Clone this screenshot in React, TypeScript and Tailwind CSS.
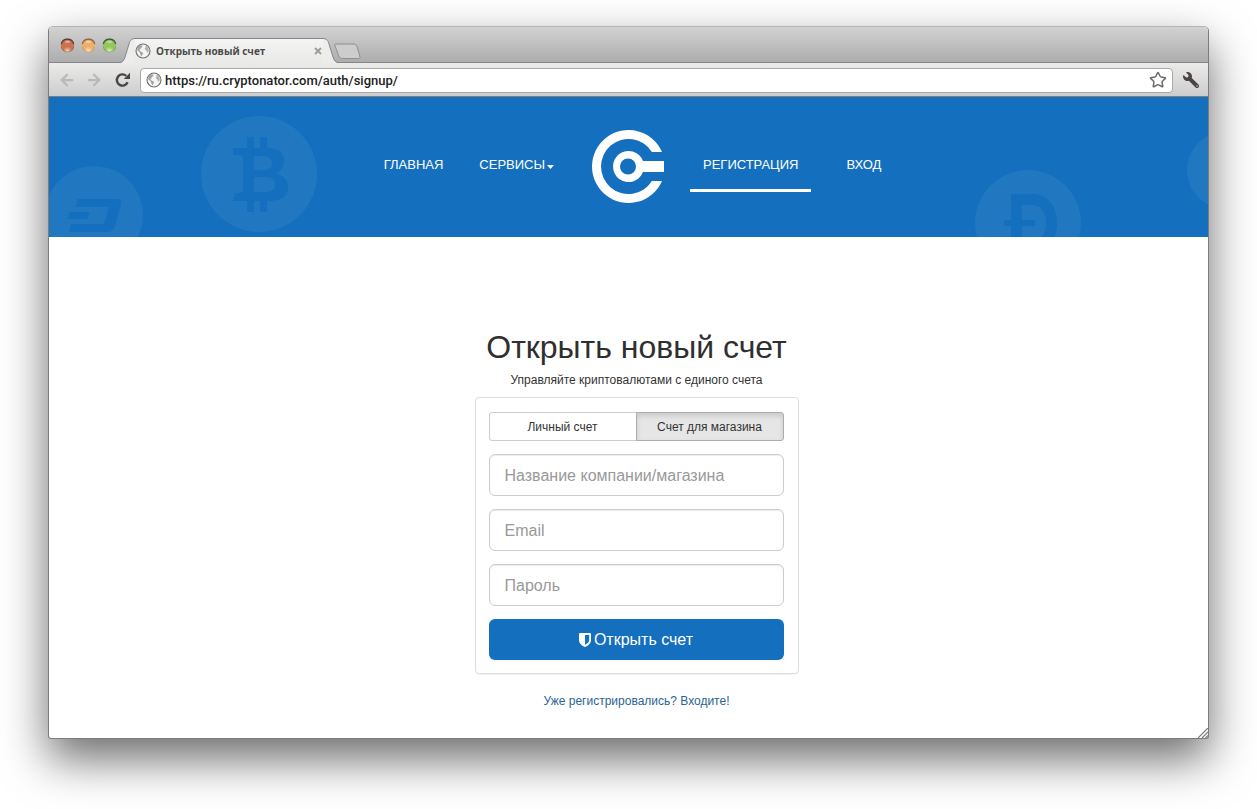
import { useState } from 'react';
import type { ReactNode } from 'react';
import { FaWrench } from 'react-icons/fa';
import { ArrowLeft, ArrowRight, Star } from 'lucide-react';

function GlobeIcon() {
  return (
    <svg viewBox="0 0 16 16" className="size-4 shrink-0" aria-hidden="true">
      <circle cx="8" cy="8" r="7" fill="#f4f4f4" stroke="#6f6f6f" strokeWidth="1.1" />
      <path d="M3 3.8 5.2 2.2 7.4 2.5 7.2 4.2 5.6 5 5.8 6.2 4.2 6.8 5.4 8.4 7.2 9.2 8.2 10.4 7.200 12 6.4 13.8 5.4 11.6 4.8 9.6 2 7Z" fill="#a3a3a3" />
      <path d="M9.8 2.6 12 3.6 13.4 5.6 13.8 8 12.6 9.8 11.8 8.8 11.2 7.2 10 6.400 9.8 5.2 10.8 4.200Z" fill="#b0b0b0" />
    </svg>
  );
}

function TrafficLight({ id, label, rim, body, glow }: { id: string; label: string; rim: string; body: string; glow: string }) {
  return (
    <button type="button" aria-label={label} className="block size-[15px]">
      <svg viewBox="0 0 15 15" className="size-[15px]">
        <defs>
          <radialGradient id={id} cx="0.5" cy="0.9" r="0.9">
            <stop offset="0" stopColor={glow} />
            <stop offset="0.35" stopColor={body} />
            <stop offset="0.82" stopColor={body} />
            <stop offset="1" stopColor={rim} />
          </radialGradient>
        </defs>
        <circle cx="7.5" cy="7.5" r="6.8" fill={`url(#${id})`} />
        <path d="M1.300 6A6.400 6.400 0 0 1 13.700 6" fill="none" stroke={rim} strokeWidth="1.3" />
        <path d="M1.300 9A6.400 6.400 0 0 0 13.700 9" fill="none" stroke={rim} strokeOpacity="0.3" />
        <ellipse cx="7.5" cy="3.8" rx="2.6" ry="1.2" fill="#fff" fillOpacity="0.4" />
      </svg>
    </button>
  );
}

function TabEdge({ className }: { className: string }) {
  return (
    <svg viewBox="0 0 15 25" className={className} aria-hidden="true">
      <path d="M0 25C3 24.500 4 22 5 19L9 6C10 2 12 .5 15 .5V25Z" fill="#ededec" />
      <path d="M0 24.500C3 24 4 22 5 19L9 6C10 2 12 .5 15 .5" fill="none" stroke="#85858f" />
    </svg>
  );
}

function TabStrip() {
  return (
    <div className="flex h-9 items-end border-b border-[#85858f] bg-linear-to-b from-[#d2d2d2] to-[#adadad]">
      <div className="flex gap-[6px] self-start pt-[11px] pl-[11px]">
        <TrafficLight id="light-close" label="Закрыть" rim="#5c3d38" body="#cb7350" glow="#ffd2b0" />
        <TrafficLight id="light-min" label="Свернуть" rim="#94633c" body="#eab06c" glow="#ffe6b4" />
        <TrafficLight id="light-max" label="Развернуть" rim="#3e5a34" body="#93c560" glow="#dcf8b4" />
      </div>
      <div className="-mb-px ml-[3px] flex h-[25px]">
        <TabEdge className="h-[25px] w-[15px]" />
        <div className="flex w-[188px] items-center border-t border-[#85858f] bg-linear-to-b from-[#f4f4f2] to-[#e9e9e8] pr-px">
          <span className="flex flex-1 items-center gap-[5px]">
            <GlobeIcon />
            <span className="font-['Open_Sans',sans-serif] text-[10px] leading-4 font-bold text-[#4a4a4a]">Открыть новый счет</span>
          </span>
          <button type="button" aria-label="Закрыть вкладку" className="block">
            <svg viewBox="0 0 8 8" className="size-2">
              <path d="M1 1 7 7M7 1 1 7" stroke="#9c9c9c" strokeWidth="1.800" />
            </svg>
          </button>
        </div>
        <TabEdge className="h-[25px] w-[15px] -scale-x-100" />
      </div>
      <button type="button" aria-label="Новая вкладка" className="-ml-[5px] block pb-[2px]">
        <svg viewBox="0 0 28 17" className="block h-[17px] w-7">
          <path d="M3 1H20C22.500 1 23.500 2 24.200 4L26.800 13C27.300 15 26.800 15.500 25.500 15.500H9.500C7.500 15.500 6.500 15 5.800 13L2 3C1.500 1.700 1.700 1 3 1Z" fill="#cdcdcd" stroke="#8e8e92" />
        </svg>
      </button>
    </div>
  );
}

function Toolbar() {
  return (
    <div className="flex h-[34px] items-center border-b border-[#7d7d7d] bg-linear-to-b from-[#ebebea] to-[#cdcdcd] px-[9px] pt-px text-[#4a4444]">
      <button type="button" aria-label="Назад" className="text-[#b9b9b9]">
        <ArrowLeft className="size-[18px]" strokeWidth={3} />
      </button>
      <button type="button" aria-label="Вперёд" className="ml-[9px] text-[#b9b9b9]">
        <ArrowRight className="size-[18px]" strokeWidth={3} />
      </button>
      <button type="button" aria-label="Обновить" className="ml-3">
        <svg viewBox="0 0 16 16" className="size-4">
          <path d="M12.600 10.200A5.600 5.600 0 1 1 11.200 3.800" fill="none" stroke="currentColor" strokeWidth="2.400" />
          <path d="M15 .8V7H8.800Z" fill="currentColor" />
        </svg>
      </button>
      <label className="ml-[9px] flex h-[25px] flex-1 items-center gap-[3px] rounded-[4px] border border-[#a9a9a9] bg-white px-[5px]">
        <GlobeIcon />
        <input
          type="text"
          aria-label="Адрес"
          defaultValue="https://ru.cryptonator.com/auth/signup/"
          className="min-w-0 flex-1 bg-transparent pt-px font-['Roboto',sans-serif] text-[13px] leading-4 font-medium text-[#222] outline-none"
        />
        <Star className="size-[18px] shrink-0 text-[#6b6b6b]" strokeWidth={2} />
      </label>
      <button type="button" aria-label="Настройки" className="ml-[10px]">
        <FaWrench className="size-4 -scale-x-100" />
      </button>
    </div>
  );
}

function BackgroundCoins() {
  return (
    <div className="pointer-events-none absolute inset-0" aria-hidden="true">
      <svg viewBox="0 0 98 98" className="absolute top-[69px] -left-[4px] size-[98px]">
        <circle cx="49" cy="49" r="49" fill="#2277c1" />
        <path d="M33 33H72Q77 33 76 38L70 60Q68 66 62 66H24L26 58H59L64 41H30ZM25 46H45L42 53H22Z" fill="#146fbe" />
      </svg>
      <svg viewBox="0 0 116 116" className="absolute top-[19px] left-[152px] size-[116px]">
        <circle cx="58" cy="58" r="58" fill="#2277c1" />
        <path
          fillRule="evenodd"
          d="M32 32H46V21H53V32H59V21H66V32C78 32 83 37 83 45C83 52 79 56 74 57C82 59 87 64 87 72C87 81 80 85 66 85V96H59V85H53V96H46V85H32L34 77H38C41 77 42 76 42 74V43C42 41 41 39 38 39H32ZM53 40V54H62C68 54 71 52 71 47C71 43 68 40 62 40ZM53 61V76H64C71 76 74 74 74 69C74 64 71 61 64 61Z"
          fill="#146fbe"
        />
      </svg>
      <svg viewBox="0 0 106 106" className="absolute top-[73px] right-[127px] size-[106px]">
        <circle cx="53" cy="53" r="53" fill="#2277c1" />
        <path fillRule="evenodd" d="M36 24H57C73 24 82 36 82 53S73 82 57 82H36V56H29V50H36ZM47 35V50H60V56H47V71H57C66 71 71 64 71 53S66 35 57 35Z" fill="#146fbe" />
      </svg>
      <svg viewBox="0 0 78 78" className="absolute top-[34px] -right-[57px] size-[78px]">
        <circle cx="39" cy="39" r="39" fill="#2277c1" />
      </svg>
    </div>
  );
}

function NavLink({ active = false, children }: { active?: boolean; children: ReactNode }) {
  return (
    <a
      href="#"
      className={`flex h-[52px] items-center border-b-[3px] px-[13px] text-[13px] leading-5 whitespace-nowrap text-white ${active ? 'border-white' : 'border-transparent'}`}
    >
      {children}
    </a>
  );
}

function SiteHeader() {
  return (
    <header className="relative h-[140px] overflow-hidden bg-[#146fbe] pb-[2px]">
      <BackgroundCoins />
      <nav className="relative grid h-full grid-cols-[1fr_auto_1fr] items-center gap-[25px]">
        <div className="flex justify-end gap-[10px]">
          <NavLink>ГЛАВНАЯ</NavLink>
          <NavLink>
            СЕРВИСЫ
            <svg viewBox="0 0 7 4" className="mt-1 ml-[2px] h-1 w-[7px]" aria-hidden="true">
              <path d="M0 0H7L3.500 4Z" fill="currentColor" />
            </svg>
          </NavLink>
        </div>
        <a href="#" aria-label="Cryptonator">
          <svg viewBox="0 0 73 73" className="size-[73px]">
            <path d="M70 22A36.500 36.500 0 1 0 70 51H59.900A27.500 27.500 0 1 1 59.900 22Z" fill="#fff" />
            <path fillRule="evenodd" d="M51 31H72V42H51A15.500 15.500 0 1 1 51 31ZM36 28.500A8 8 0 1 0 36 44.500A8 8 0 1 0 36 28.500Z" fill="#fff" />
          </svg>
        </a>
        <div className="flex gap-[22px]">
          <NavLink active>РЕГИСТРАЦИЯ</NavLink>
          <NavLink>ВХОД</NavLink>
        </div>
      </nav>
    </header>
  );
}

function Field({ type, label }: { type: string; label: string }) {
  return (
    <input
      type={type}
      aria-label={label}
      placeholder={label}
      className="h-[42px] w-full rounded-[6px] border border-[#cccccc] bg-white px-[15px] pt-[2px] text-[16px] leading-5 text-[#333] shadow-[inset_0_1px_1px_rgba(0,0,0,0.075)] outline-none placeholder:text-[#999]"
    />
  );
}

const accountTypes = ['Личный счет', 'Счет для магазина'];

function SignupForm() {
  const [selected, setSelected] = useState(1);
  return (
    <form
      onSubmit={(event) => event.preventDefault()}
      className="flex w-full max-w-[324px] flex-col gap-[13px] rounded-[4px] border border-[#dddddd] pt-[14px] pr-[14px] pb-[13px] pl-[13px] shadow-[0_1px_1px_rgba(0,0,0,0.05)]"
    >
      <div className="flex h-[29px]">
        {accountTypes.map((name, index) => (
          <button
            key={name}
            type="button"
            aria-pressed={selected === index}
            onClick={() => setSelected(index)}
            className={`flex-1 border text-[12px] leading-4 text-[#333] first:rounded-l-[3px] last:-ml-px last:rounded-r-[3px] ${
              selected === index ? 'border-[#adadad] bg-[#e6e6e6] shadow-[inset_0_3px_5px_rgba(0,0,0,0.125)]' : 'border-[#cccccc] bg-white'
            }`}
          >
            {name}
          </button>
        ))}
      </div>
      <Field type="text" label="Название компании/магазина" />
      <Field type="email" label="Email" />
      <Field type="password" label="Пароль" />
      <button type="submit" className="flex h-[41px] items-center justify-center gap-[3px] rounded-[6px] bg-[#146fbe] pt-px text-[16px] leading-5 text-white">
        <svg viewBox="0 0 12 14" className="h-[14px] w-3" aria-hidden="true">
          <path fillRule="evenodd" d="M1 0H11Q12 0 12 1V7C12 10.500 9 12.800 6 14C3 12.800 0 10.500 0 7V1Q0 0 1 0ZM6 2V11.800C8.300 10.600 10.200 9 10.200 7V2Z" fill="currentColor" />
        </svg>
        Открыть счет
      </button>
    </form>
  );
}

export default function App() {
  return (
    <div className="min-h-screen bg-white px-12 pt-[26px] pb-[70px] font-['Liberation_Sans',Arial,sans-serif]">
      <div className="relative overflow-hidden rounded-t-[5px] rounded-b-[3px] border border-[#7c7c7c] border-t-[#b4b4b4] bg-white shadow-[0_20px_46px_rgba(0,0,0,0.58)]">
        <TabStrip />
        <Toolbar />
        <SiteHeader />
        <main className="flex flex-col items-center pt-[89px] pb-[28px] pl-4 text-[#333]">
          <h1 className="text-[32px] leading-[42px] text-[#2f2f2f]">Открыть новый счет</h1>
          <p className="mt-1 mb-2 text-[12px] leading-[17px]">Управляйте криптовалютами с единого счета</p>
          <SignupForm />
          <a href="#" className="mt-[19px] text-[12px] leading-[17px] text-[#2a6496]">Уже регистрировались? Входите!</a>
        </main>
        <svg viewBox="0 0 10 10" className="absolute right-0 bottom-0 size-[10px]" aria-hidden="true">
          <path d="M0 10 10 0M4 10 10 4M7.500 10 10 7.500" stroke="#777" strokeWidth="1.200" />
        </svg>
      </div>
    </div>
  );
}
